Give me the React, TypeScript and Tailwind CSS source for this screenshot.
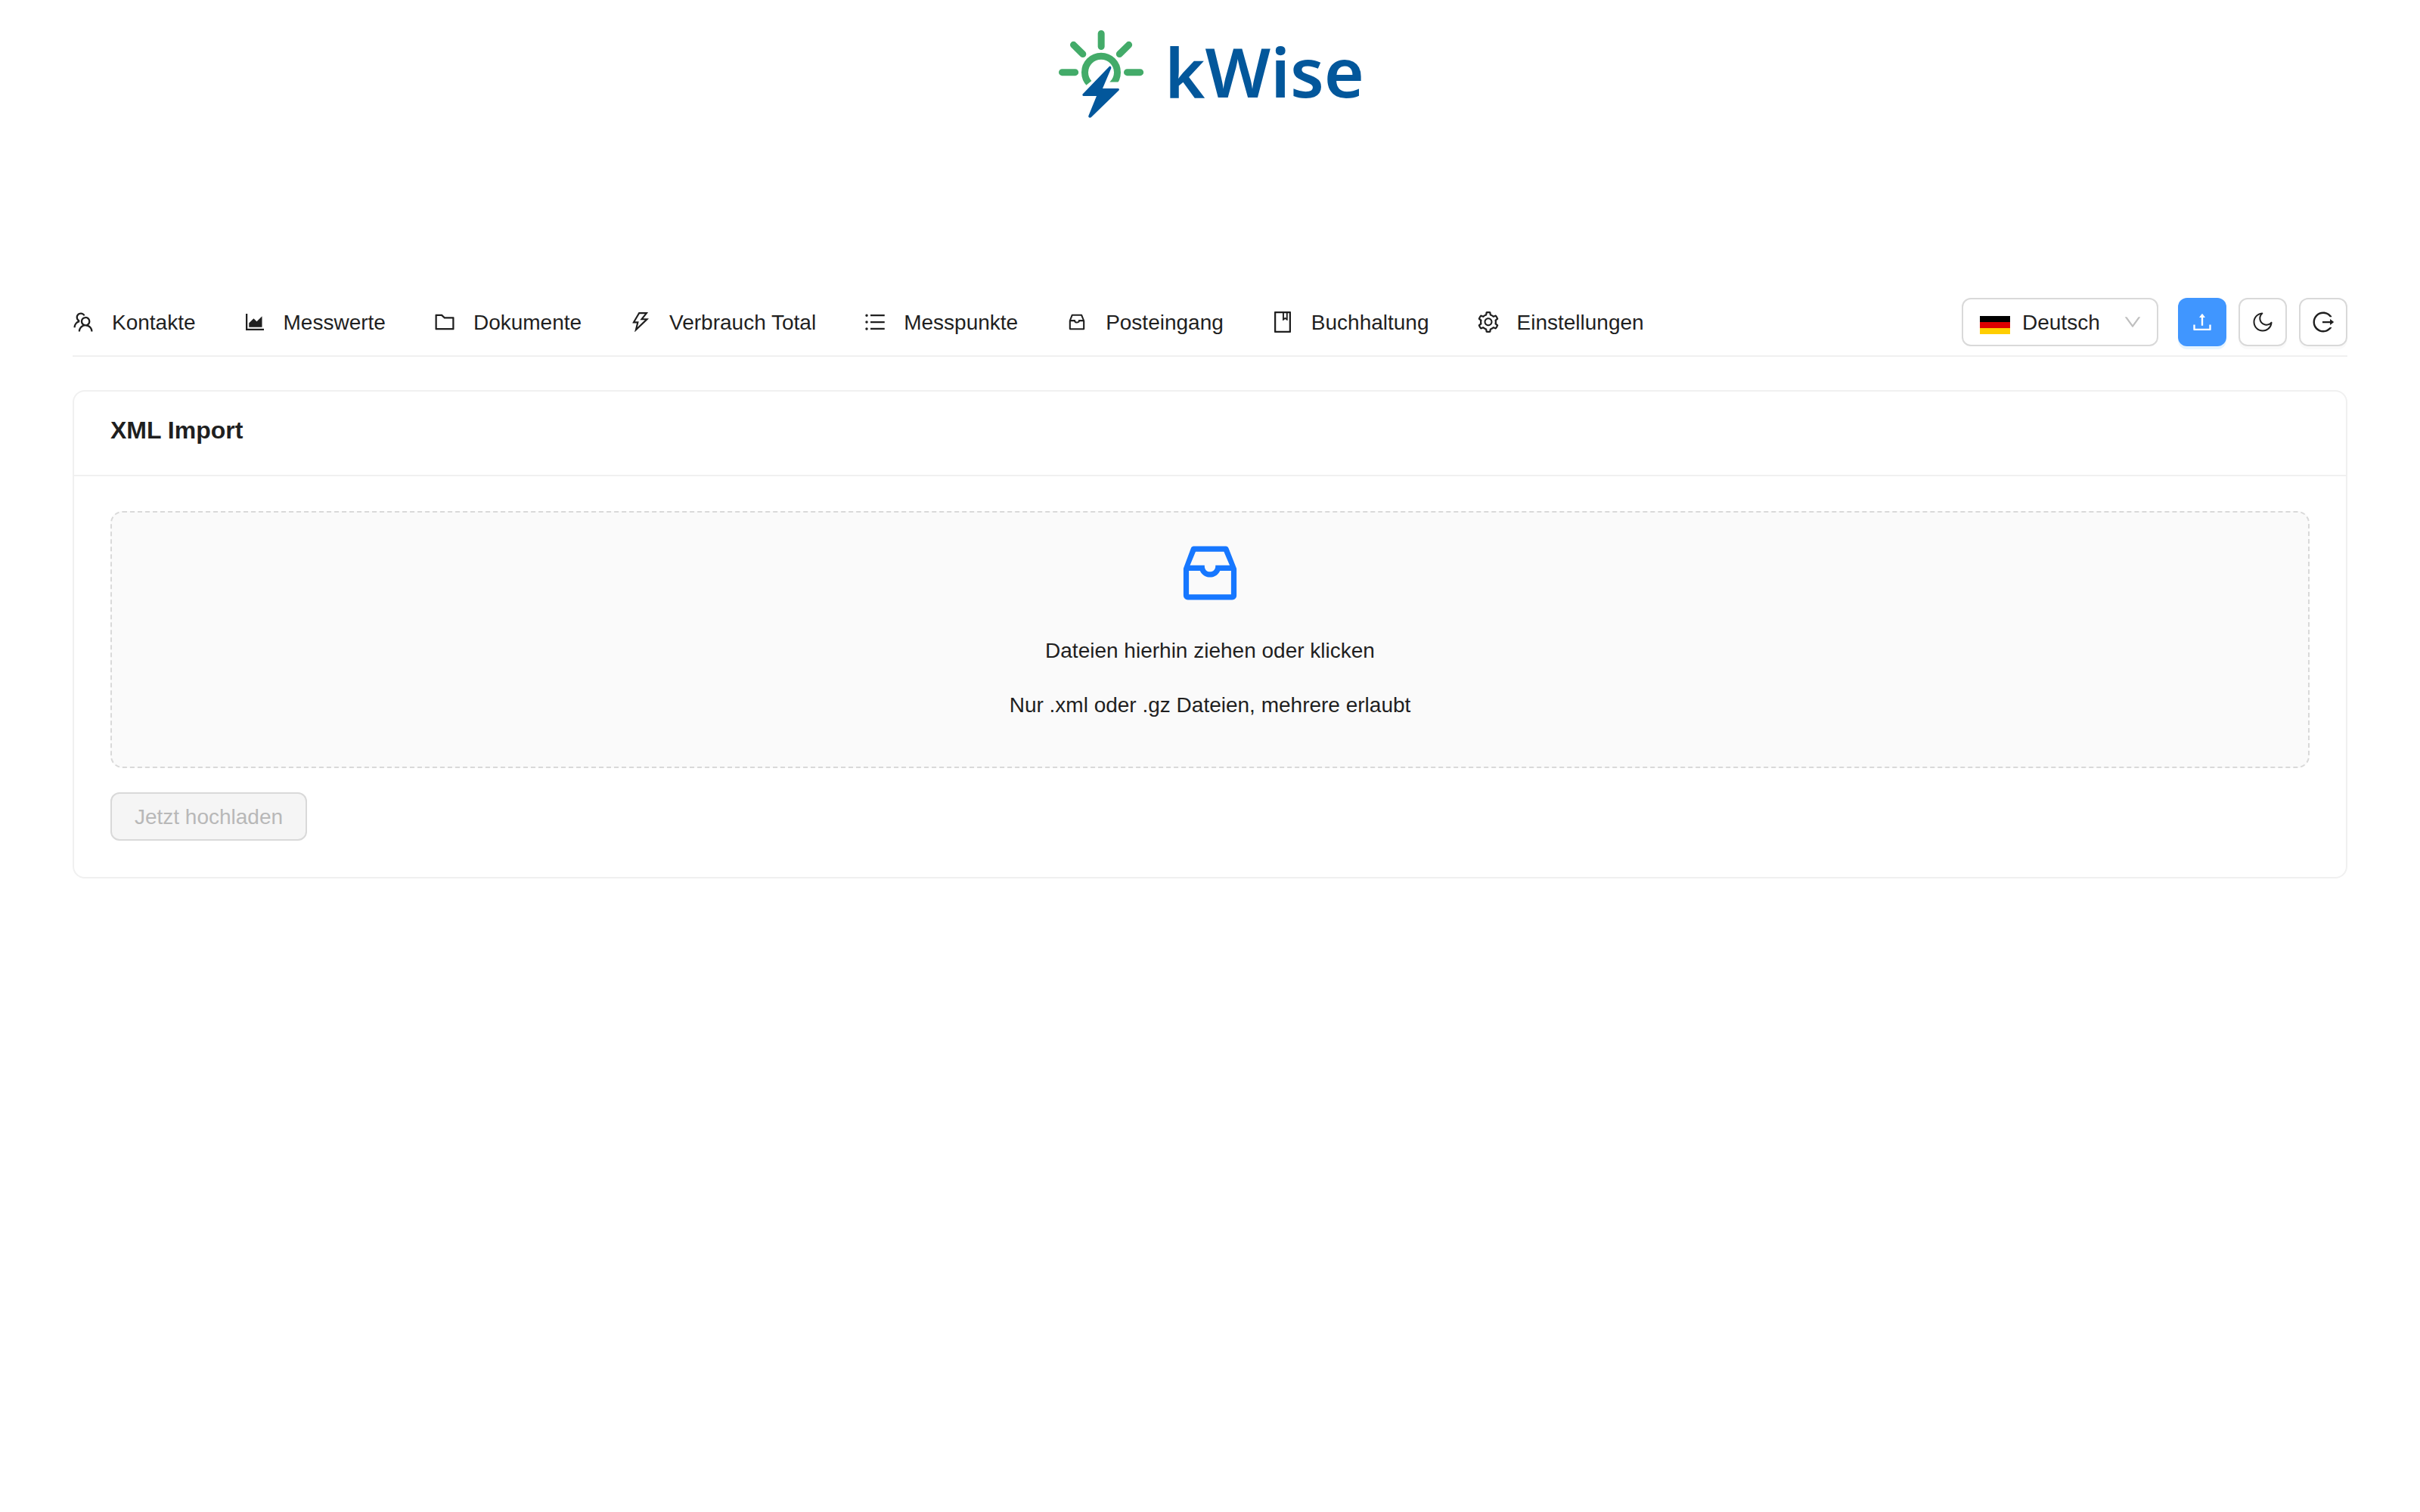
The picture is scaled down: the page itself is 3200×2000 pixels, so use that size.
import React from "react";
import {
  AiOutlineTeam, AiOutlineAreaChart, AiOutlineFolder, AiOutlineThunderbolt, AiOutlineUnorderedList,
  AiOutlineInbox, AiOutlineBook, AiOutlineSetting, AiOutlineUpload, AiOutlineMoon, AiOutlineLogout, AiOutlineDown,
} from "react-icons/ai";

// Most glyphs are drawn on the inner 896-unit box; the inbox uses the full 1024-unit box.
const TIGHT = "64 64 896 896";
const FULL = "0 0 1024 1024";

const items = [
  { label: "Kontakte", Icon: AiOutlineTeam, box: TIGHT },
  { label: "Messwerte", Icon: AiOutlineAreaChart, box: TIGHT },
  { label: "Dokumente", Icon: AiOutlineFolder, box: TIGHT },
  { label: "Verbrauch Total", Icon: AiOutlineThunderbolt, box: TIGHT },
  { label: "Messpunkte", Icon: AiOutlineUnorderedList, box: TIGHT },
  { label: "Posteingang", Icon: AiOutlineInbox, box: FULL },
  { label: "Buchhaltung", Icon: AiOutlineBook, box: TIGHT },
  { label: "Einstellungen", Icon: AiOutlineSetting, box: TIGHT },
];

function Logo() {
  return (
    <svg width="440" height="150" viewBox="0 0 1320 450" className="block">
      <g stroke="#43ab69" strokeWidth="27" strokeLinecap="round" fill="none">
        <path d="M228.500 73.500V124.500M118.500 118L155.500 154.500M338 118L301 154.500M73.500 227H125M331.500 227H383" />
        <circle cx="228" cy="227" r="64.500" />
      </g>
      <path d="M168 279L190 261L262 200V265.500H312V320H150Z" fill="#fff" />
      <path d="M261 203C266 201 269 206 268 211L234 291H294C300 291 302 296 297 300L189 405C184 410 176 406 178 400L210 321H160C154 321 152 315 157 311Z" fill="#03579b" />
      <text x="480" y="327" fill="#03579b" fontFamily="'Noto Sans', sans-serif" fontWeight="600" fontSize="273">kWise</text>
    </svg>
  );
}

const square = "flex h-16 w-16 items-center justify-center rounded-xl";

export default function App() {
  return (
    <div className="flex h-[2000px] w-[3200px] flex-col bg-white px-24 font-['Liberation_Sans',Arial,sans-serif] text-[28px] leading-[44px] text-[#1f1f1f]">
      <header className="flex h-[376px] justify-center pt-5">
        <Logo />
      </header>

      <nav className="flex h-24 items-center justify-between border-b-2 border-[#f0f0f0] pt-1.5">
        <ul className="flex gap-16">
          {items.map(({ label, Icon, box }) => (
            <li key={label} className="flex items-center">
              <Icon size={28} viewBox={box} />
              <span className="ml-6 pt-0.5 whitespace-nowrap">{label}</span>
            </li>
          ))}
        </ul>
        <div className="flex items-center gap-4">
          <div className="mr-2.5 flex h-16 w-[260px] items-center rounded-xl border-2 border-[#d9d9d9] pr-5 pl-[22px]">
            <span className="mt-2 flex h-6 w-10 flex-col">
              <span className="flex-1 bg-black" />
              <span className="flex-1 bg-[#dd0000]" />
              <span className="flex-1 bg-[#ffce00]" />
            </span>
            <span className="ml-4 flex-1 pt-0.5">Deutsch</span>
            <AiOutlineDown size={24} viewBox={TIGHT} className="text-[#bfbfbf]" />
          </div>
          <button className={square + " bg-[#4096ff] text-white shadow-[0_4px_0_rgba(5,145,255,0.1)]"}><AiOutlineUpload size={28} viewBox={TIGHT} /></button>
          <button className={square + " border-2 border-[#d9d9d9] shadow-[0_4px_0_rgba(0,0,0,0.02)]"}><AiOutlineMoon size={28} viewBox={TIGHT} /></button>
          <button className={square + " border-2 border-[#d9d9d9] shadow-[0_4px_0_rgba(0,0,0,0.02)]"}><AiOutlineLogout size={28} viewBox={TIGHT} /></button>
        </div>
      </nav>

      <section className="mt-11 h-[646px] rounded-2xl border-2 border-[#f0f0f0]">
        <div className="h-28 border-b-2 border-[#f0f0f0] px-12 pt-[26px]">
          <h2 className="text-[32px] leading-[50px] font-bold">XML Import</h2>
        </div>
        <div className="p-12 pt-[46px]">
          <div className="flex h-[340px] flex-col items-center rounded-2xl border-2 border-dashed border-[#d9d9d9] bg-[#fafafa] pt-8">
            <AiOutlineInbox size={96} className="text-[#1677ff]" />
            <p className="mt-[33px]">Dateien hierhin ziehen oder klicken</p>
            <p className="mt-7">Nur .xml oder .gz Dateien, mehrere erlaubt</p>
          </div>
          <button className="mt-8 flex h-16 w-[260px] items-center justify-center rounded-xl border-2 border-[#d9d9d9] bg-[#f5f5f5] pt-0.5 text-[#b8b8b8]">Jetzt hochladen</button>
        </div>
      </section>
    </div>
  );
}
